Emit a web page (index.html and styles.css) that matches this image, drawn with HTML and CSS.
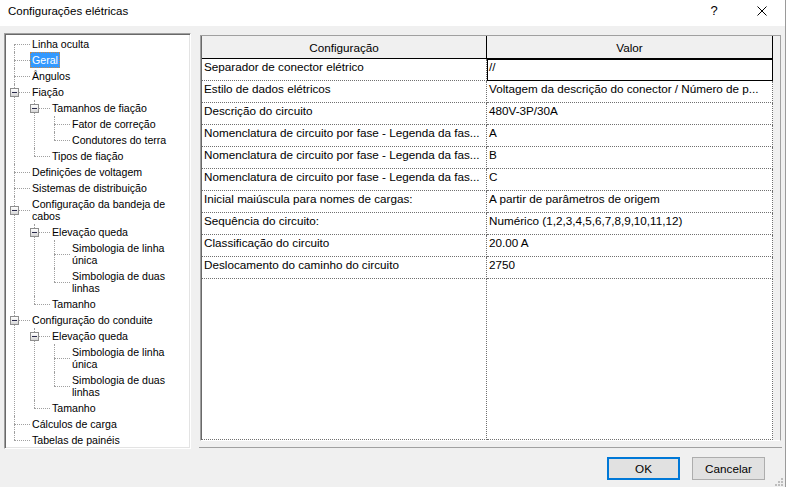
FILE: index.html
```html
<!DOCTYPE html>
<html lang="pt">
<head>
<meta charset="utf-8">
<title>Configurações elétricas</title>
<link rel="stylesheet" href="styles.css">
</head>
<body>
<div class="window">
  <div class="titlebar">
    <span class="title">Configurações elétricas</span>
    <span class="help">?</span>
    <span class="close"><svg width="10" height="10" viewBox="0 0 10 10"><path d="M0.5 0.5 L9.5 9.5 M9.5 0.5 L0.5 9.5" stroke="#000" stroke-width="1" fill="none"/></svg></span>
  </div>
  <div class="main">
    <div class="tree">
      <ul class="tree-root">
        <li><div class="node"><span class="txt">Linha oculta</span></div></li>
        <li><div class="node"><span class="txt sel">Geral</span></div></li>
        <li><div class="node"><span class="txt">Ângulos</span></div></li>
        <li><div class="node"><span class="box"></span><span class="txt">Fiação</span></div>
          <ul>
            <li><div class="node"><span class="box"></span><span class="txt">Tamanhos de fiação</span></div>
              <ul>
                <li><div class="node"><span class="txt">Fator de correção</span></div></li>
                <li><div class="node"><span class="txt">Condutores do terra</span></div></li>
              </ul>
            </li>
            <li><div class="node"><span class="txt">Tipos de fiação</span></div></li>
          </ul>
        </li>
        <li><div class="node"><span class="txt">Definições de voltagem</span></div></li>
        <li><div class="node"><span class="txt">Sistemas de distribuição</span></div></li>
        <li><div class="node"><span class="box"></span><span class="txt">Configuração da bandeja de<br>cabos</span></div>
          <ul>
            <li><div class="node"><span class="box"></span><span class="txt">Elevação queda</span></div>
              <ul>
                <li><div class="node"><span class="txt">Simbologia de linha<br>única</span></div></li>
                <li><div class="node"><span class="txt">Simbologia de duas<br>linhas</span></div></li>
              </ul>
            </li>
            <li><div class="node"><span class="txt">Tamanho</span></div></li>
          </ul>
        </li>
        <li><div class="node"><span class="box"></span><span class="txt">Configuração do conduite</span></div>
          <ul>
            <li><div class="node"><span class="box"></span><span class="txt">Elevação queda</span></div>
              <ul>
                <li><div class="node"><span class="txt">Simbologia de linha<br>única</span></div></li>
                <li><div class="node"><span class="txt">Simbologia de duas<br>linhas</span></div></li>
              </ul>
            </li>
            <li><div class="node"><span class="txt">Tamanho</span></div></li>
          </ul>
        </li>
        <li><div class="node"><span class="txt">Cálculos de carga</span></div></li>
        <li><div class="node"><span class="txt">Tabelas de painéis</span></div></li>
      </ul>
    </div>
    <div class="panel">
      <div class="grid">
        <div class="table">
          <div class="hrow">
            <div class="hcell">Configuração</div>
            <div class="hcell">Valor</div>
          </div>
          <div class="row"><div class="cell c1">Separador de conector elétrico</div><div class="cell c2 selcell">//</div></div>
          <div class="row"><div class="cell c1">Estilo de dados elétricos</div><div class="cell c2">Voltagem da descrição do conector / Número de p...</div></div>
          <div class="row"><div class="cell c1">Descrição do circuito</div><div class="cell c2">480V-3P/30A</div></div>
          <div class="row"><div class="cell c1">Nomenclatura de circuito por fase - Legenda da fas...</div><div class="cell c2">A</div></div>
          <div class="row"><div class="cell c1">Nomenclatura de circuito por fase - Legenda da fas...</div><div class="cell c2">B</div></div>
          <div class="row"><div class="cell c1">Nomenclatura de circuito por fase - Legenda da fas...</div><div class="cell c2">C</div></div>
          <div class="row"><div class="cell c1">Inicial maiúscula para nomes de cargas:</div><div class="cell c2">A partir de parâmetros de origem</div></div>
          <div class="row"><div class="cell c1">Sequência do circuito:</div><div class="cell c2">Numérico (1,2,3,4,5,6,7,8,9,10,11,12)</div></div>
          <div class="row"><div class="cell c1">Classificação do circuito</div><div class="cell c2">20.00 A</div></div>
          <div class="row"><div class="cell c1">Deslocamento do caminho do circuito</div><div class="cell c2">2750</div></div>
          <div class="row filler"><div class="cell c1"></div><div class="cell c2"></div></div>
        </div>
      </div>
      <div class="panel-line"></div>
    </div>
  </div>
  <div class="footer">
    <button class="btn ok">OK</button>
    <button class="btn">Cancelar</button>
  </div>
  <svg class="grip" width="10" height="10" viewBox="0 0 10 10">
    <rect x="7" y="1" width="2" height="2" fill="#bdbdbd"/>
    <rect x="4" y="4" width="2" height="2" fill="#bdbdbd"/>
    <rect x="7" y="4" width="2" height="2" fill="#bdbdbd"/>
    <rect x="1" y="7" width="2" height="2" fill="#bdbdbd"/>
    <rect x="4" y="7" width="2" height="2" fill="#bdbdbd"/>
    <rect x="7" y="7" width="2" height="2" fill="#bdbdbd"/>
  </svg>
</div>
</body>
</html>
```

FILE: styles.css
```css
html, body {
  margin: 0;
  padding: 0;
  background: #f0f0f0;
}

.window {
  position: relative;
  width: 786px;
  height: 487px;
  box-sizing: border-box;
  border-right: 1px solid #9a9a9a;
  background: #f0f0f0;
  font-family: "Liberation Sans", Arial, sans-serif;
  color: #000;
  overflow: hidden;
}

/* Title bar */
.titlebar {
  height: 26px;
  background: #fff;
  display: flex;
  align-items: flex-start;
}

.title {
  flex: 1;
  padding-left: 8px;
  font-size: 11.5px;
  line-height: 22px;
  white-space: nowrap;
}

.help {
  width: 20px;
  text-align: center;
  font-size: 13px;
  line-height: 22px;
  margin-right: 15px;
}

.close {
  width: 46px;
  height: 22px;
  display: flex;
  align-items: center;
  justify-content: center;
}

.close svg {
  display: block;
}

/* Main area */
.main {
  display: flex;
  padding: 7px 0 0 4px;
  height: 416px;
}

/* Tree */
.tree {
  width: 187px;
  height: 416px;
  box-sizing: border-box;
  background: #fff;
  border: 1px solid;
  border-color: #a0a0a0 #ffffff #ffffff #a0a0a0;
  box-shadow: inset 1px 1px 0 #696969, inset -1px -1px 0 #e3e3e3;
  padding-top: 2px;
  font-size: 10.6px;
  overflow: hidden;
}

.tree ul {
  list-style: none;
  margin: 0;
  padding: 0;
}

.tree ul ul {
  padding-left: 20px;
}

.tree li {
  position: relative;
}

.tree li:not(:last-child)::before {
  content: "";
  position: absolute;
  left: 9px;
  top: 0;
  bottom: 0;
  border-left: 1px dotted #a0a0a0;
}

.tree-root > li:first-child::before {
  top: 8px !important;
}

.tree li:last-child > .node::before {
  content: "";
  position: absolute;
  left: 9px;
  top: 0;
  height: 50%;
  border-left: 1px dotted #a0a0a0;
}

.node {
  position: relative;
  display: flex;
  align-items: center;
  padding-left: 25px;
}

.node::after {
  content: "";
  position: absolute;
  left: 9px;
  width: 16px;
  top: 50%;
  border-top: 1px dotted #a0a0a0;
}

.box {
  position: absolute;
  left: 5px;
  top: calc(50% - 4px);
  width: 9px;
  height: 9px;
  box-sizing: border-box;
  border: 1px solid #8e8e8e;
  background: linear-gradient(#ffffff, #d6d6d6);
  z-index: 1;
}

.box::before {
  content: "";
  position: absolute;
  left: 1px;
  right: 1px;
  top: 3px;
  height: 1px;
  background: #2a2a4a;
}

.txt {
  display: inline-block;
  padding: 2px 2px;
  line-height: 12px;
  white-space: nowrap;
}

.txt.sel {
  background: #3399ff;
  color: #fff;
  outline: 1px dotted #c98a4c;
  outline-offset: -1px;
}

/* Right panel */
.panel {
  margin-left: 8px;
  width: 583px;
  height: 416px;
  padding-top: 2px;
  box-sizing: border-box;
}

.grid {
  margin-left: 1px;
  width: 581px;
  height: 406px;
  box-sizing: border-box;
  border: 1px solid #a0a0a0;
  border-bottom-color: #ffffff;
  padding-left: 1px;
  box-shadow: inset 1px 0 0 #696969;
  background: #f0f0f0;
}

.table {
  width: 571px;
  height: 404px;
  display: flex;
  flex-direction: column;
  background: #fff;
  font-size: 11.7px;
}

.hrow {
  display: flex;
  background: #f0f0f0;
}

.hcell {
  height: 23px;
  box-sizing: border-box;
  border-right: 1px solid #000;
  border-bottom: 1px solid #000;
  padding-top: 5px;
  line-height: 14px;
  text-align: center;
}

.hcell:first-child {
  width: 285px;
}

.hcell:last-child {
  width: 286px;
}

.row {
  display: flex;
}

.cell {
  height: 22px;
  box-sizing: border-box;
  padding: 1px 2px 0;
  line-height: 14px;
  border-right: 1px dotted #707070;
  border-bottom: 1px dotted #707070;
  white-space: nowrap;
  overflow: hidden;
}

.c1 {
  width: 285px;
}

.c2 {
  width: 286px;
}

.selcell {
  outline: 1px solid #000;
  outline-offset: -1px;
}

.row.filler {
  flex: 1;
}

.row.filler .cell {
  height: auto;
}

.panel-line {
  margin-top: 6px;
  height: 1px;
  background: #a0a0a0;
}

/* Footer */
.footer {
  display: flex;
  justify-content: flex-end;
  gap: 12px;
  padding: 8px 20px 0 0;
}

.btn {
  width: 73px;
  height: 23px;
  box-sizing: border-box;
  margin: 0;
  padding: 0;
  background: #e1e1e1;
  border: 1px solid #adadad;
  font-family: "Liberation Sans", Arial, sans-serif;
  font-size: 11.7px;
  color: #000;
}

.btn.ok {
  border: 2px solid #0078d7;
}

.grip {
  position: absolute;
  right: 1px;
  bottom: 0;
  display: block;
}
```
